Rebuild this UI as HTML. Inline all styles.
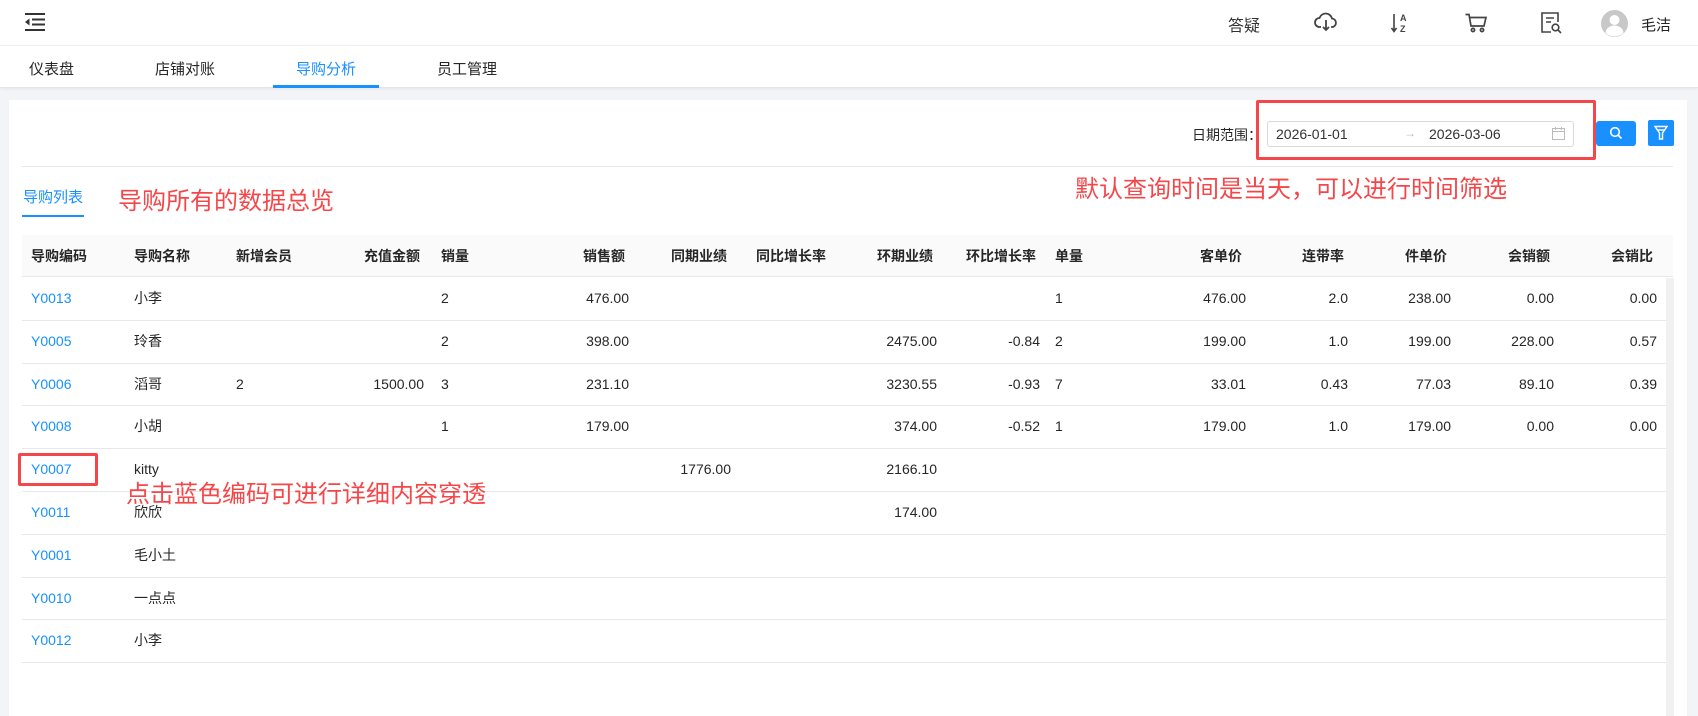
<!DOCTYPE html>
<html><head><meta charset="utf-8"><style>
*{margin:0;padding:0;box-sizing:border-box}
body{width:1698px;height:716px;overflow:hidden;background:#f3f4f7;font-family:"Liberation Sans","Noto Sans CJK SC",sans-serif;color:#262626;position:relative}
.a{position:absolute;white-space:nowrap}
.top{position:absolute;left:0;top:0;width:1698px;height:46px;background:#fff;border-bottom:1px solid #f0f0f0}
.tabs{position:absolute;left:0;top:46px;width:1698px;height:42px;background:#fff;border-bottom:1px solid #e4e4e4;box-shadow:0 1px 3px rgba(0,0,0,.06)}
.tab{position:absolute;top:12px;font-size:15px;color:#262626}
.card{position:absolute;left:9px;top:100px;width:1678px;height:616px;background:#fff}
.red{color:#f5474a;font-size:24px}
.box{position:absolute;border:3px solid #f5474a;border-radius:2px}
.th{position:absolute;top:235px;left:22px;width:1651px;height:42px;background:#fafafa;border-bottom:1px solid #e8e8e8}
.line{position:absolute;left:22px;width:1644px;height:1px;background:#e8e8e8}
.c{position:absolute;font-size:14px;white-space:nowrap;line-height:20px}
.h{font-weight:bold;color:#262626}
.b{color:#1890ff}
</style></head><body>
<div class="top">
 <svg class="a" style="left:25px;top:13px" width="20" height="18" viewBox="0 0 20 18"><rect x="0" y="0" width="20" height="2" fill="#333"/><rect x="7" y="5.5" width="13" height="2" fill="#333"/><rect x="7" y="10.5" width="13" height="2" fill="#333"/><rect x="0" y="16" width="20" height="2" fill="#333"/><path d="M0 9 L4.5 5.5 V12.5Z" fill="#333"/></svg>
 <div class="a" style="left:1228px;top:12px;font-size:16px;color:#333">答疑</div>
 <svg class="a" style="left:1314px;top:12px" width="24" height="20" viewBox="0 0 24 20" fill="none" stroke="#444" stroke-width="1.8"><path d="M7 15 H5.5 A4.5 4.5 0 0 1 5.5 6 A6.5 6.5 0 0 1 18 6.5 A4.3 4.3 0 0 1 18.5 15 H17"/><path d="M12 8 V18 M9 15 L12 18 L15 15"/></svg>
 <svg class="a" style="left:1391px;top:12px" width="20" height="22" viewBox="0 0 20 22"><path d="M3 2 V19 M0.5 16 L3 19.5 L5.5 16" stroke="#444" stroke-width="1.6" fill="none"/><text x="9" y="9" font-size="9" font-weight="bold" fill="#444" font-family="Liberation Sans">A</text><text x="9" y="20" font-size="9" font-weight="bold" fill="#444" font-family="Liberation Sans">Z</text></svg>
 <svg class="a" style="left:1465px;top:13px" width="23" height="20" viewBox="0 0 23 20" fill="none" stroke="#444" stroke-width="1.7"><path d="M0.5 1.5 H4 L6 13 H19 L21 4.5 H5"/><circle cx="8" cy="17" r="1.6"/><circle cx="17" cy="17" r="1.6"/></svg>
 <svg class="a" style="left:1541px;top:12px" width="22" height="22" viewBox="0 0 22 22" fill="none" stroke="#444" stroke-width="1.6"><path d="M10 20 H1 V1 H17 V10"/><path d="M5 6 H13 M5 10 H10"/><circle cx="14.5" cy="15.5" r="3.3"/><path d="M17 18 L20 21"/></svg>
 <svg class="a" style="left:1601px;top:10px" width="27" height="27" viewBox="0 0 27 27"><circle cx="13.5" cy="13.5" r="13.5" fill="#c8c8c8"/><circle cx="13.5" cy="10" r="5" fill="#fff"/><path d="M4.5 23 A9 7.5 0 0 1 22.5 23 A13.5 13.5 0 0 1 4.5 23Z" fill="#fff"/></svg>
 <div class="a" style="left:1641px;top:14px;font-size:15px;color:#222">毛洁</div>
</div>
<div class="tabs">
 <div class="tab" style="left:29px">仪表盘</div>
 <div class="tab" style="left:155px">店铺对账</div>
 <div class="tab" style="left:296px;color:#1890ff">导购分析</div>
 <div class="a" style="left:273px;top:39px;width:106px;height:3px;background:#1890ff"></div>
 <div class="tab" style="left:437px">员工管理</div>
</div>
<div class="card"></div>
<div class="a" style="left:1192px;top:125px;font-size:14px;color:#262626">日期范围：</div>
<div class="a" style="left:1267px;top:121px;width:307px;height:26px;border:1px solid #d9d9d9;border-radius:3px;background:#fff"></div>
<div class="a" style="left:1276px;top:126px;font-size:14px;color:#333">2026-01-01</div>
<div class="a" style="left:1404px;top:126px;font-size:12px;color:#bbb">→</div>
<div class="a" style="left:1429px;top:126px;font-size:14px;color:#333">2026-03-06</div>
<svg class="a" style="left:1552px;top:127px" width="13" height="13" viewBox="0 0 13 13" fill="none" stroke="#bbb" stroke-width="1"><rect x="0.5" y="1.5" width="12" height="11"/><path d="M0.5 4.5 H12.5 M3.5 0 V3 M9.5 0 V3"/></svg>
<div class="box" style="left:1256px;top:100px;width:340px;height:60px"></div>
<div class="a" style="left:1596px;top:121px;width:40px;height:25px;background:#1890ff;border-radius:3px"></div>
<svg class="a" style="left:1609px;top:126px" width="14" height="14" viewBox="0 0 14 14" fill="none" stroke="#fff" stroke-width="1.6"><circle cx="6" cy="6" r="4.3"/><path d="M9 9 L12.5 12.5"/></svg>
<div class="a" style="left:1648px;top:120px;width:26px;height:26px;background:#1890ff;border-radius:2px"></div>
<svg class="a" style="left:1654px;top:125px" width="14" height="16" viewBox="0 0 14 16" fill="none" stroke="#fff" stroke-width="1.4"><path d="M1 1.5 H13 L8.5 8 V14 H5.5 V8Z"/><path d="M3.5 5 H10.5"/></svg>
<div class="line" style="top:166px;width:1651px"></div>
<div class="a" style="left:23px;top:186px;font-size:15px;color:#1890ff">导购列表</div>
<div class="a" style="left:22px;top:215px;width:62px;height:2px;background:#1890ff"></div>
<div class="a red" style="left:118px;top:181px">导购所有的数据总览</div>
<div class="a red" style="right:191px;top:169px">默认查询时间是当天，可以进行时间筛选</div>
<div class="th"></div>
<div class="a" style="left:1666px;top:278px;width:8px;height:438px;background:#f1f1f1"></div>
<div id="t"></div>
<div class="box" style="left:18px;top:453px;width:80px;height:33px"></div>
<div class="a red" style="left:126px;top:474px">点击蓝色编码可进行详细内容穿透</div>
<script>
var cols=[['L',31],['L',134],['L',236],['R',424],['L',441],['R',629],['R',731],['L',756],['R',937],['R',1040],['L',1055],['R',1246],['R',1348],['R',1451],['R',1554],['R',1657]];
var hdr=['导购编码','导购名称','新增会员','充值金额','销量','销售额','同期业绩','同比增长率','环期业绩','环比增长率','单量','客单价','连带率','件单价','会销额','会销比'];
var rows=[
['Y0013','小李','','','2','476.00','','','','','1','476.00','2.0','238.00','0.00','0.00'],
['Y0005','玲香','','','2','398.00','','','2475.00','-0.84','2','199.00','1.0','199.00','228.00','0.57'],
['Y0006','滔哥','2','1500.00','3','231.10','','','3230.55','-0.93','7','33.01','0.43','77.03','89.10','0.39'],
['Y0008','小胡','','','1','179.00','','','374.00','-0.52','1','179.00','1.0','179.00','0.00','0.00'],
['Y0007','kitty','','','','','1776.00','','2166.10','','','','','','',''],
['Y0011','欣欣','','','','','','','174.00','','','','','','',''],
['Y0001','毛小土','','','','','','','','','','','','','',''],
['Y0010','一点点','','','','','','','','','','','','','',''],
['Y0012','小李','','','','','','','','','','','','','','']];
var h='';
function cell(x,y,t,cls,adj){var c=cols[x];var p=c[0]=='L'?'left:'+c[1]+'px':'right:'+(1698-c[1]-adj)+'px';return '<div class="c '+cls+'" style="'+p+';top:'+y+'px">'+t+'</div>';}
hdr.forEach(function(t,i){h+=cell(i,246,t,'h',-4);});
rows.forEach(function(r,j){var top=277+j*42.8;var y=Math.round(top+11);r.forEach(function(t,i){if(t)h+=cell(i,y,t,i==0?'b':'',0);});h+='<div class="line" style="top:'+Math.round(top+42.8)+'px"></div>';});
document.getElementById('t').innerHTML=h;
</script>
</body></html>
